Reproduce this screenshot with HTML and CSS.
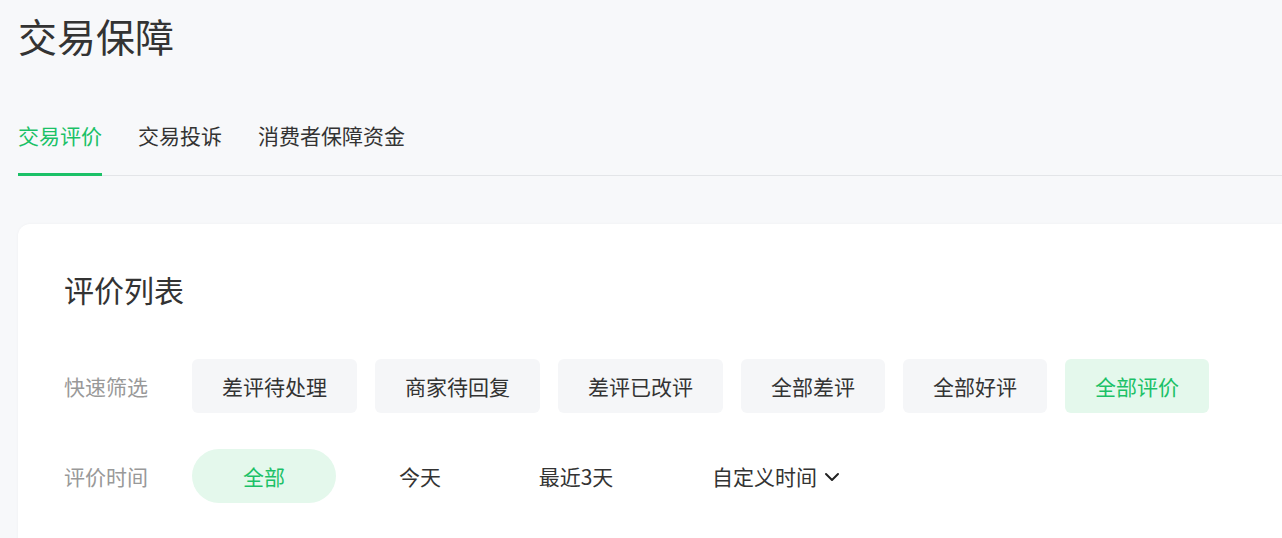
FILE: index.html
```html
<!DOCTYPE html>
<html lang="zh-CN">
<head>
<meta charset="utf-8">
<title>交易保障</title>
<link rel="stylesheet" href="styles.css">
</head>
<body>
<div class="page">
  <h1 class="page-title">交易保障</h1>
  <nav class="tabs">
    <a class="tab tab-active">交易评价</a>
    <a class="tab">交易投诉</a>
    <a class="tab">消费者保障资金</a>
  </nav>
  <section class="card">
    <h2 class="card-title">评价列表</h2>
    <div class="filter-row">
      <span class="filter-label">快速筛选</span>
      <div class="chips">
        <span class="chip">差评待处理</span>
        <span class="chip">商家待回复</span>
        <span class="chip">差评已改评</span>
        <span class="chip">全部差评</span>
        <span class="chip">全部好评</span>
        <span class="chip chip-active">全部评价</span>
      </div>
    </div>
    <div class="filter-row filter-row-time">
      <span class="filter-label">评价时间</span>
      <div class="pills">
        <span class="pill pill-active">全部</span>
        <span class="pill">今天</span>
        <span class="pill">最近3天</span>
        <span class="pill pill-dropdown">自定义时间
          <svg class="chevron" width="16" height="10" viewBox="0 0 16 10" aria-hidden="true"><polyline points="2,2 8,8 14,2" fill="none" stroke="#222" stroke-width="2" stroke-linecap="round" stroke-linejoin="round"/></svg>
        </span>
      </div>
    </div>
  </section>
</div>
</body>
</html>
```
FILE: styles.css
```css
html, body {
  margin: 0;
  padding: 0;
  background: #f7f8fa;
  font-family: "Noto Sans CJK SC", "Noto Sans", "Liberation Sans", sans-serif;
  color: #333;
  overflow: hidden;
}

.page {
  padding-left: 18px;
  height: 538px;
  overflow: hidden;
}

.page-title {
  margin: 0;
  padding-top: 16px;
  padding-bottom: 2px;
  font-size: 39px;
  line-height: 39px;
  font-weight: 400;
  color: #333;
}

.tabs {
  display: flex;
  gap: 36px;
  margin-top: 68px;
  border-bottom: 1px solid #e3e5e8;
}

.tab {
  font-size: 21px;
  line-height: 21px;
  color: #333;
  padding-bottom: 27px;
  border-bottom: 3px solid transparent;
  margin-bottom: -1px;
}

.tab-active {
  color: #1bc167;
  border-bottom-color: #1bc167;
}

.card {
  margin-top: 48px;
  background: #fff;
  border-radius: 12px 0 0 0;
  box-shadow: 0 0 3px rgba(0, 0, 0, 0.04);
  padding: 50px 0 40px 46px;
  height: 400px;
}

.card-title {
  margin: 0;
  padding-bottom: 2px;
  font-size: 30px;
  line-height: 30px;
  font-weight: 400;
  color: #333;
}

.filter-row {
  display: flex;
  align-items: center;
  margin-top: 53px;
}

.filter-row-time {
  margin-top: 36px;
}

.filter-label {
  width: 128px;
  flex: none;
  font-size: 21px;
  line-height: 21px;
  color: #999;
}

.chips {
  display: flex;
  gap: 18px;
}

.chip {
  height: 54px;
  padding: 0 30px;
  display: flex;
  align-items: center;
  background: #f5f6f8;
  border-radius: 6px;
  font-size: 21px;
  line-height: 21px;
  color: #333;
}

.chip-active {
  background: #e4f8ec;
  color: #1bc167;
}

.pills {
  display: flex;
  gap: 12px;
}

.pill {
  min-width: 144px;
  box-sizing: border-box;
  height: 54px;
  padding: 0 20px;
  display: flex;
  align-items: center;
  justify-content: center;
  border-radius: 27px;
  font-size: 21px;
  line-height: 21px;
  color: #333;
}

.pill-active {
  background: #e4f8ec;
  color: #1bc167;
}

.pill-dropdown {
  padding-left: 52px;
  justify-content: flex-start;
  gap: 7px;
}

.chevron {
  display: block;
  margin-top: 1px;
}
```
